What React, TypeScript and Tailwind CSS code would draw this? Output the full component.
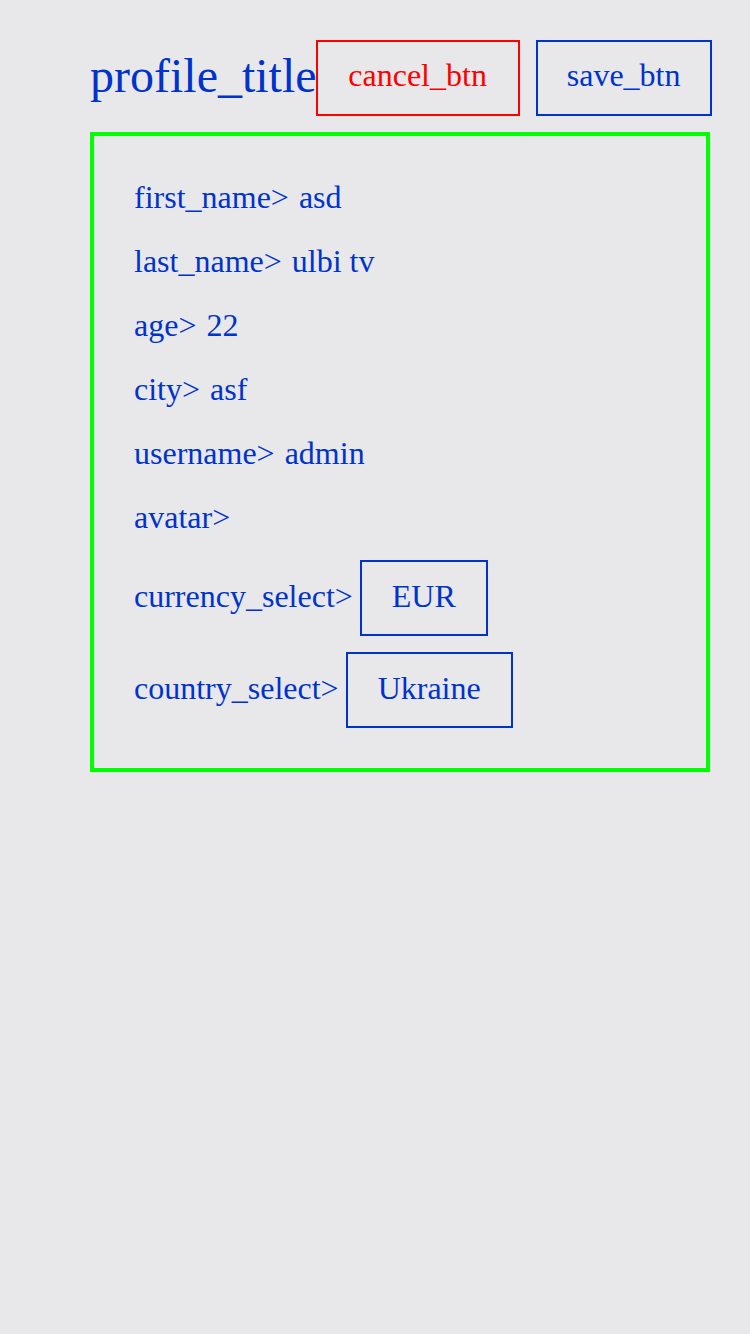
const rows = [
  { label: "first_name>", value: "asd" },
  { label: "last_name>", value: "ulbi tv" },
  { label: "age>", value: "22" },
  { label: "city>", value: "asf" },
  { label: "username>", value: "admin" },
  { label: "avatar>", value: "" },
];

function Select({ label, value }: { label: string; value: string }) {
  return (
    <div className="flex items-center gap-[7px]">
      <span className="pb-[5px]">{label}</span>
      <div className="flex h-[76px] items-center border-2 border-[#0033cc] px-[30px] pb-[5px]">{value}</div>
    </div>
  );
}

export default function App() {
  return (
    <div
      className="min-h-[1334px] bg-[#e8e8eb] pl-[90px] pr-[40px] pt-[40px] text-[#0033cc]"
      style={{ fontFamily: '"Liberation Serif", "Times New Roman", serif' }}
    >
      <div className="flex items-center">
        <h1 className="-mr-px whitespace-nowrap pb-[6px] text-[48px] leading-[55px]">profile_title</h1>
        <div className="flex gap-4 text-[32px]">
          <button className="flex h-[76px] w-[204px] items-center justify-center border-2 border-[#ff0000] pb-[6px] text-[#ff0000]">
            cancel_btn
          </button>
          <button className="flex h-[76px] w-[176px] items-center justify-center border-2 border-[#0033cc] pb-[6px]">
            save_btn
          </button>
        </div>
      </div>

      <div className="mt-4 flex w-[620px] flex-col gap-4 border-4 border-[#00ff00] p-10 text-[32px]">
        {rows.map((row) => (
          <div key={row.label} className="flex h-12 items-center gap-[10px] whitespace-nowrap pb-[6px]">
            <span>{row.label}</span>
            {row.value && <span>{row.value}</span>}
          </div>
        ))}
        <Select label="currency_select>" value="EUR" />
        <Select label="country_select>" value="Ukraine" />
      </div>
    </div>
  );
}
